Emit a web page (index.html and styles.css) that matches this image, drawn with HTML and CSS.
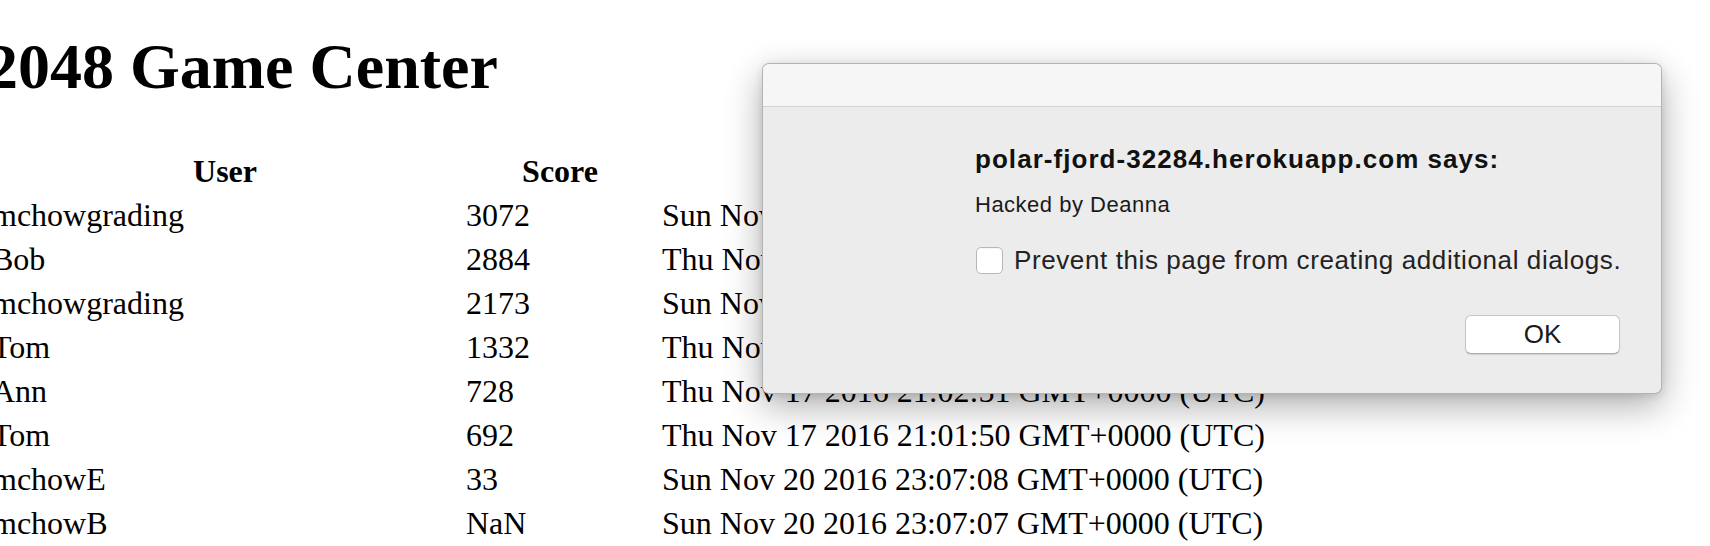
FILE: index.html
```html
<!DOCTYPE html>
<html>
<head>
<meta charset="utf-8">
<title>2048 Game Center</title>
<link rel="stylesheet" href="styles.css">
</head>
<body>
<div class="page">
  <h1 class="title">2048 Game Center</h1>
  <table class="scores">
    <thead>
      <tr>
        <th class="col-user">User</th>
        <th class="col-score">Score</th>
        <th class="col-date">Date</th>
      </tr>
    </thead>
    <tbody>
      <tr><td>mchowgrading</td><td>3072</td><td>Sun Nov 20 2016 23:05:12 GMT+0000 (UTC)</td></tr>
      <tr><td>Bob</td><td>2884</td><td>Thu Nov 17 2016 21:04:33 GMT+0000 (UTC)</td></tr>
      <tr><td>mchowgrading</td><td>2173</td><td>Sun Nov 20 2016 22:58:40 GMT+0000 (UTC)</td></tr>
      <tr><td>Tom</td><td>1332</td><td>Thu Nov 17 2016 21:03:18 GMT+0000 (UTC)</td></tr>
      <tr><td>Ann</td><td>728</td><td>Thu Nov 17 2016 21:02:51 GMT+0000 (UTC)</td></tr>
      <tr><td>Tom</td><td>692</td><td>Thu Nov 17 2016 21:01:50 GMT+0000 (UTC)</td></tr>
      <tr><td>mchowE</td><td>33</td><td>Sun Nov 20 2016 23:07:08 GMT+0000 (UTC)</td></tr>
      <tr><td>mchowB</td><td>NaN</td><td>Sun Nov 20 2016 23:07:07 GMT+0000 (UTC)</td></tr>
    </tbody>
  </table>
</div>

<div class="dialog">
  <div class="dialog-header"></div>
  <div class="dialog-body">
    <div class="dialog-title">polar-fjord-32284.herokuapp.com says:</div>
    <div class="dialog-message">Hacked by Deanna</div>
    <label class="dialog-check">
      <span class="checkbox"></span>
      <span class="check-label">Prevent this page from creating additional dialogs.</span>
    </label>
    <div class="dialog-actions">
      <button class="ok-button">OK</button>
    </div>
  </div>
</div>
</body>
</html>
```

FILE: styles.css
```css
html, body {
  margin: 0;
  padding: 0;
  background: #ffffff;
  overflow: hidden;
}

.page {
  margin-left: -14px;
  padding-top: 31px;
  font-family: "Liberation Serif", "Times New Roman", serif;
  color: #000;
}

.title {
  margin: 0 0 44px 0;
  font-size: 64px;
  line-height: 72px;
  font-weight: bold;
  white-space: nowrap;
}

.scores {
  border-collapse: separate;
  border-spacing: 4px;
  font-size: 32px;
  line-height: 36px;
}

.scores th,
.scores td {
  padding: 2px;
  white-space: nowrap;
  text-align: left;
}

.scores th {
  text-align: center;
  font-weight: bold;
}

.col-user {
  width: 466px;
}

.col-score {
  width: 188px;
}

/* Alert dialog overlay */
.dialog {
  position: absolute;
  left: 762px;
  top: 63px;
  width: 900px;
  height: 331px;
  box-sizing: border-box;
  border: 1px solid rgba(0, 0, 0, 0.24);
  border-radius: 7px;
  background: #ececec;
  box-shadow: 0 12px 36px rgba(0, 0, 0, 0.32), 0 2px 8px rgba(0, 0, 0, 0.1);
  overflow: hidden;
  display: flex;
  flex-direction: column;
  font-family: "Liberation Sans", Arial, sans-serif;
}

.dialog-header {
  height: 42px;
  flex: none;
  background: #f6f6f6;
  border-bottom: 1px solid #d3d3d3;
}

.dialog-body {
  flex: 1;
  display: flex;
  flex-direction: column;
  padding: 37px 41px 0 212px;
}

.dialog-title {
  font-size: 26px;
  line-height: 30px;
  font-weight: bold;
  letter-spacing: 1.05px;
  color: #111;
  white-space: nowrap;
}

.dialog-message {
  margin-top: 19px;
  font-size: 22px;
  line-height: 24px;
  letter-spacing: 0.5px;
  color: #1a1a1a;
  white-space: nowrap;
}

.dialog-check {
  margin-top: 30px;
  display: flex;
  align-items: center;
  gap: 11px;
  height: 27px;
}

.checkbox {
  width: 25px;
  height: 25px;
  flex: none;
  margin-left: 1px;
  background: #ffffff;
  border: 1px solid #b8b8b8;
  border-radius: 5px;
  box-shadow: inset 0 1px 1px rgba(0, 0, 0, 0.04);
}

.check-label {
  font-size: 26px;
  line-height: 27px;
  letter-spacing: 0.6px;
  color: #222;
  white-space: nowrap;
}

.dialog-actions {
  margin-top: 41px;
  display: flex;
  justify-content: flex-end;
}

.ok-button {
  width: 155px;
  height: 39px;
  box-sizing: border-box;
  background: #ffffff;
  border: 1px solid #c6c6c6;
  border-bottom-color: #adadad;
  border-radius: 6px;
  box-shadow: 0 1px 1px rgba(0, 0, 0, 0.12);
  font-family: "Liberation Sans", Arial, sans-serif;
  font-size: 26px;
  line-height: 37px;
  color: #1a1a1a;
  padding: 0;
}
```
